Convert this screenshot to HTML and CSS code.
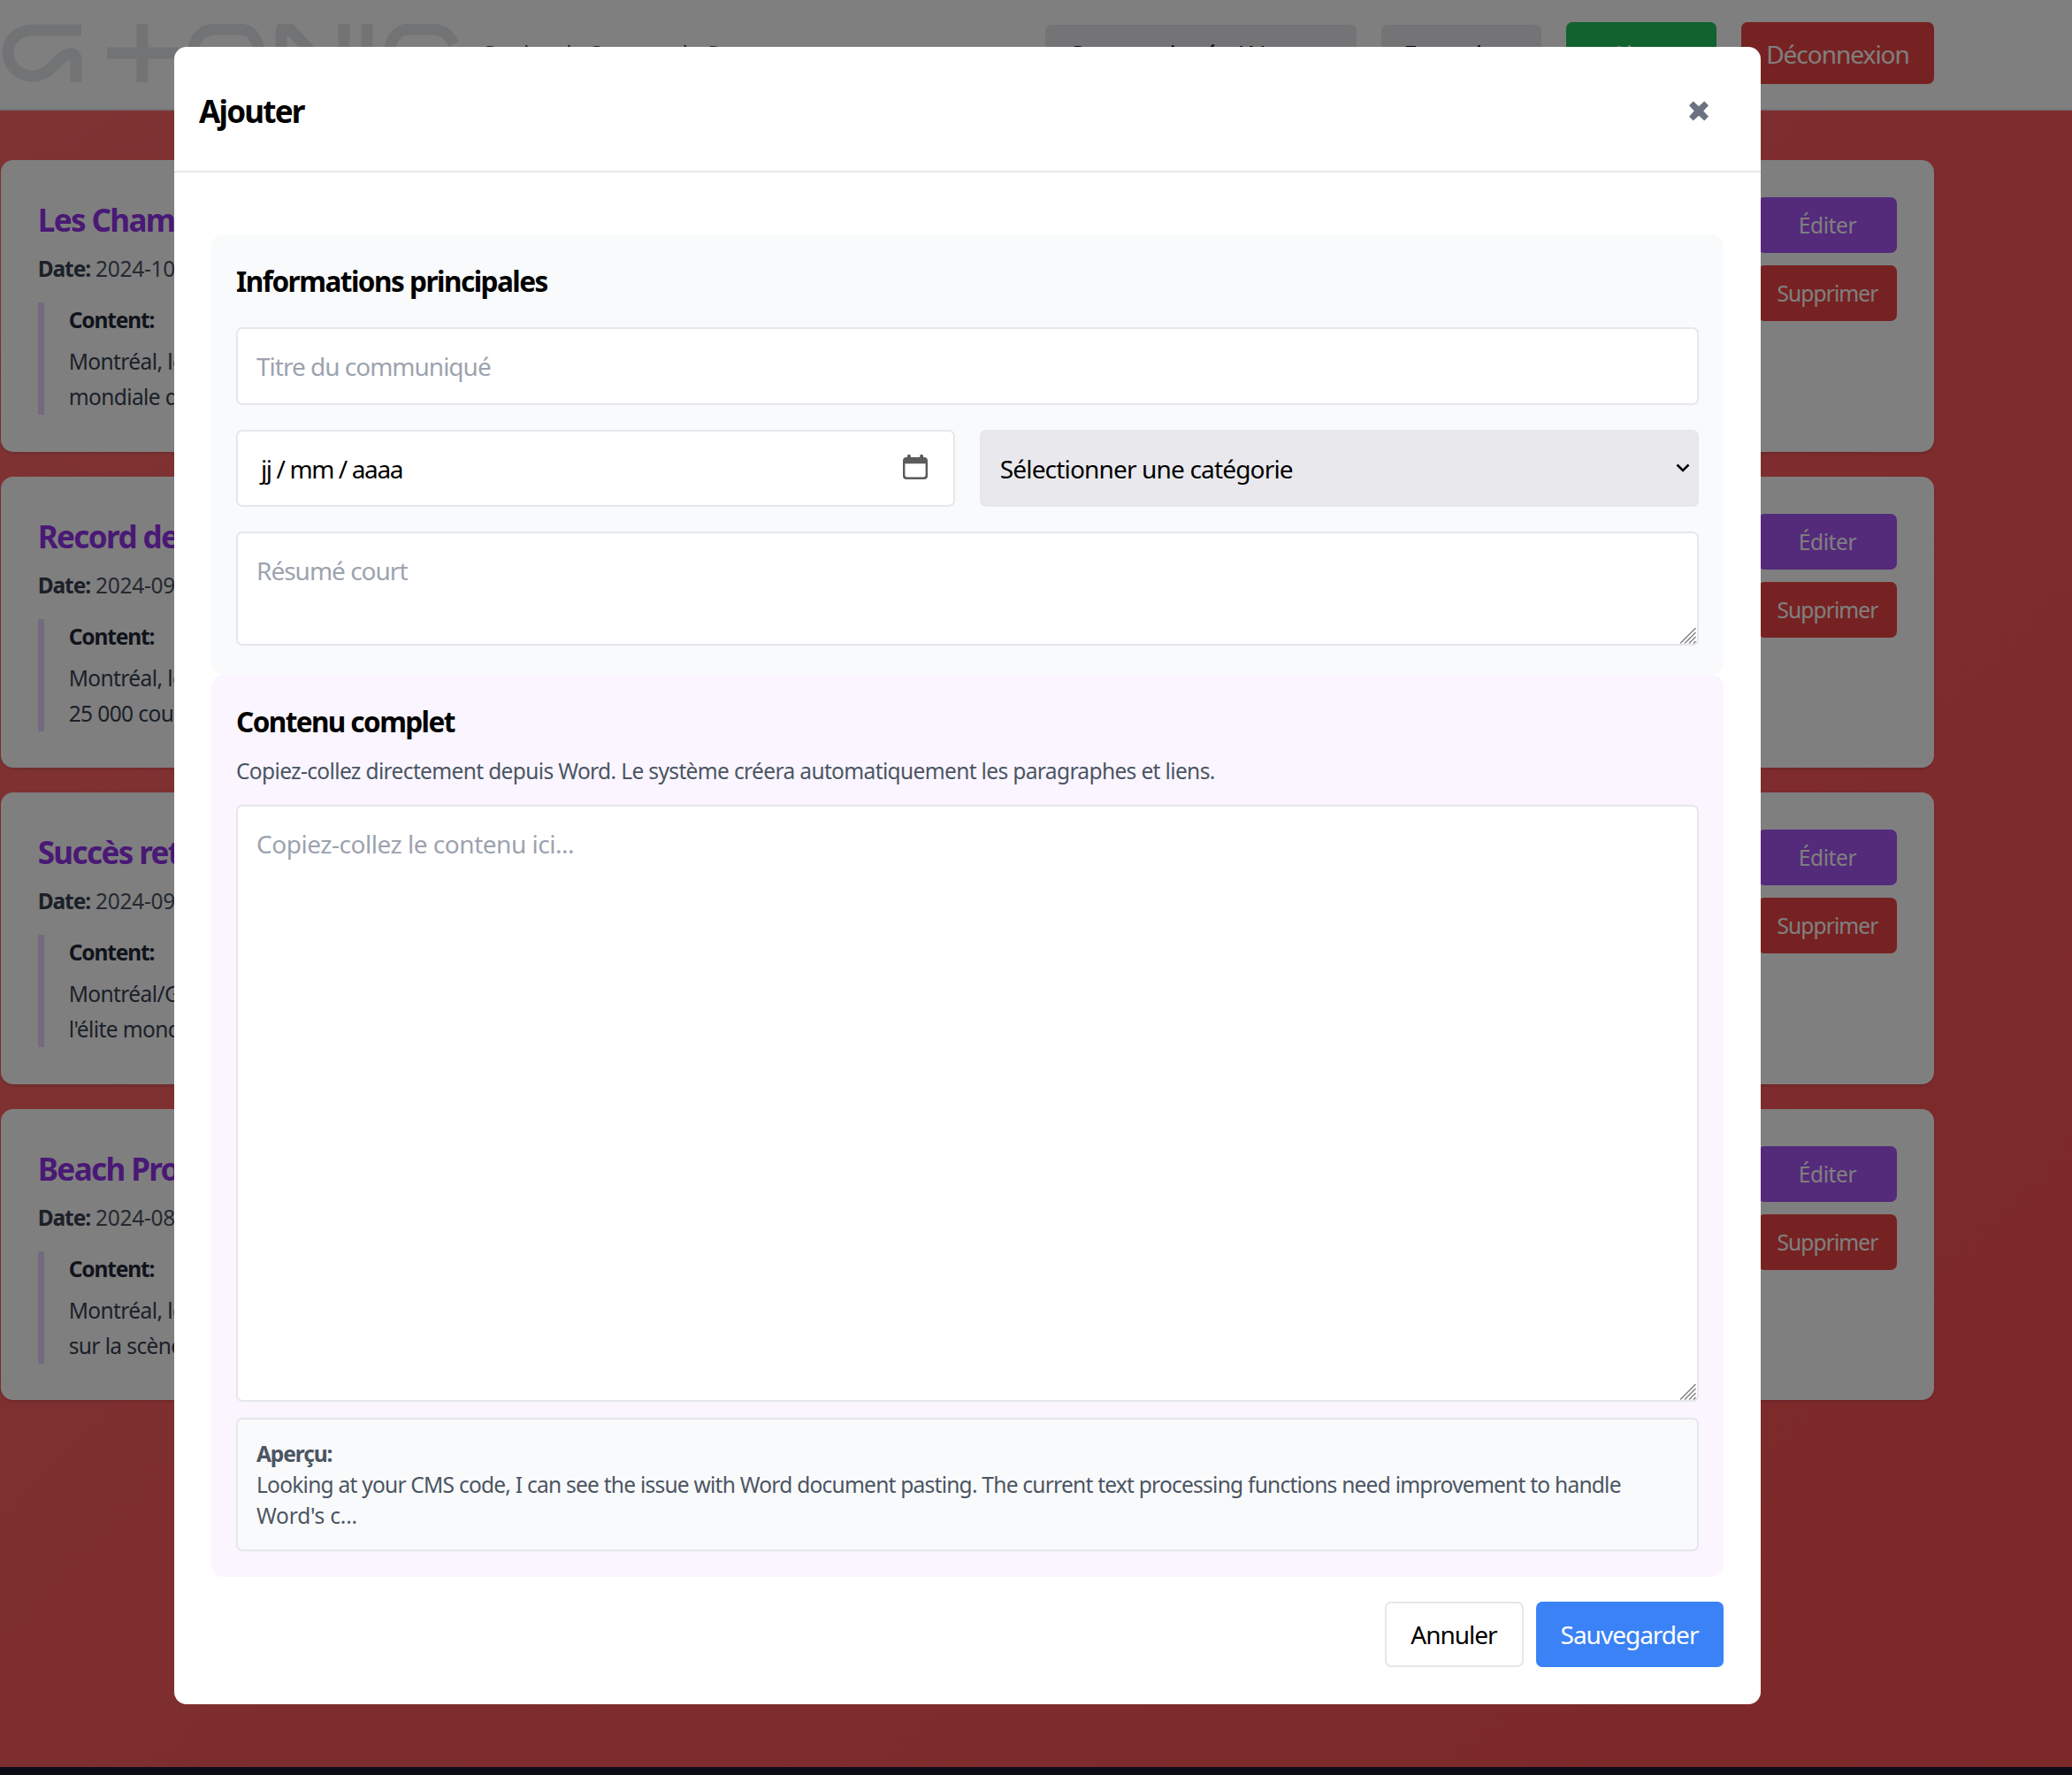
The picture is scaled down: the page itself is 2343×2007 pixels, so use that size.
FILE: index.html
```html
<!DOCTYPE html>
<html lang="fr">
<head>
<meta charset="utf-8">
<title>Gestion de Contenu</title>
<link rel="stylesheet" href="styles.css">
</head>
<body>
<div class="page">
  <header class="topbar">
    <svg class="logo" width="520" height="70" viewBox="0 0 520 70" fill="none" stroke="#e5e7eb" stroke-width="13">
      <path d="M91 7H37C18 7 8 19 8 33S20 59 36 59C58 59 65 34 79 34C84 34 85 37 85 42V66"/>
      <path d="M160 0V66M120 33H200M216 44C216 18 224 6 244 6H268C286 6 293 20 293 44"/>
      <path d="M317 67V10C317 2 323 2 328 7L372 55M388 0V67M414 0V67M512 23C506 10 498 6 485 6H462C446 6 439 20 439 40"/>
    </svg>
    <span class="tagline">Gestion de Contenu de G</span>
    <nav class="tools">
      <div class="pick pick-type">Communiqués / News</div>
      <div class="pick pick-lang">Français</div>
      <button class="btn-top green">+ Ajouter</button>
      <button class="btn-top red">Déconnexion</button>
    </nav>
  </header>
  <main class="list">
    <article class="card">
      <div><h2>Les Champ</h2><p class="date"><b>Date:</b> 2024-10</p>
      <div class="excerpt"><b>Content:</b><p>Montréal, le<br>mondiale de</p></div></div>
      <div class="actions"><button class="edit">Éditer</button><button class="del">Supprimer</button></div>
    </article>
    <article class="card">
      <div><h2>Record de</h2><p class="date"><b>Date:</b> 2024-09</p>
      <div class="excerpt"><b>Content:</b><p>Montréal, le<br>25 000 coure</p></div></div>
      <div class="actions"><button class="edit">Éditer</button><button class="del">Supprimer</button></div>
    </article>
    <article class="card">
      <div><h2>Succès rete</h2><p class="date"><b>Date:</b> 2024-09</p>
      <div class="excerpt"><b>Content:</b><p>Montréal/Ga<br>l'élite mond</p></div></div>
      <div class="actions"><button class="edit">Éditer</button><button class="del">Supprimer</button></div>
    </article>
    <article class="card">
      <div><h2>Beach Pro</h2><p class="date"><b>Date:</b> 2024-08</p>
      <div class="excerpt"><b>Content:</b><p>Montréal, le<br>sur la scène</p></div></div>
      <div class="actions"><button class="edit">Éditer</button><button class="del">Supprimer</button></div>
    </article>
  </main>
  <footer class="foot"></footer>
</div>
<div class="overlay">
  <section class="modal">
    <header class="modal-head">
      <h1>Ajouter</h1>
      <svg class="close" width="24" height="23" viewBox="0 0 22 22" fill="#6b7280"><path d="M5 .5L11 6L17 .5L21.5 5L16 11L21.5 17L17 21.5L11 16L5 21.5L.5 17L6 11L.5 5Z"/></svg>
    </header>
    <form class="modal-body">
      <div class="group info">
        <h3>Informations principales</h3>
        <input class="field" placeholder="Titre du communiqué">
        <div class="row">
          <div class="field date-field"><span>jj / mm / aaaa</span>
            <svg width="28" height="28" viewBox="0 0 28 28"><path d="M5 3V1.7a1.9 1.9 0 0 1 3.8 0V3h10.4V1.7a1.9 1.9 0 0 1 3.8 0V3h1a4 4 0 0 1 4 4v17a4 4 0 0 1-4 4H4a4 4 0 0 1-4-4V7a4 4 0 0 1 4-4zM2.4 10.2v13a2.4 2.4 0 0 0 2.4 2.4h18.4a2.4 2.4 0 0 0 2.4-2.4v-13z" fill="#5b5b5b" fill-rule="evenodd"/></svg>
          </div>
          <div class="field select-field"><span>Sélectionner une catégorie</span>
            <svg width="16" height="11" viewBox="0 0 16 11" fill="none" stroke="#000" stroke-width="2.5"><path d="M1.5 1.5L8 8L14.5 1.5"/></svg>
          </div>
        </div>
        <div class="area short"><textarea placeholder="Résumé court"></textarea>
          <svg class="grip" width="18" height="18" viewBox="0 0 18 18" stroke="#808080" stroke-width="1.4"><path d="M0 17.5L17.5 0M5 17.5L17.5 5M10 17.5L17.5 10M15 17.5L17.5 15"/></svg></div>
      </div>
      <div class="group full">
        <h3>Contenu complet</h3>
        <p class="hint">Copiez-collez directement depuis Word. Le système créera automatiquement les paragraphes et liens.</p>
        <div class="area tall"><textarea placeholder="Copiez-collez le contenu ici..."></textarea>
          <svg class="grip" width="18" height="18" viewBox="0 0 18 18" stroke="#808080" stroke-width="1.4"><path d="M0 17.5L17.5 0M5 17.5L17.5 5M10 17.5L17.5 10M15 17.5L17.5 15"/></svg></div>
        <div class="preview"><b>Aperçu:</b><p>Looking at your CMS code, I can see the issue with Word document pasting. The current text processing functions need improvement to handle<br><span class="last">Word's c...</span></p></div>
      </div>
      <div class="buttons"><button type="button" class="cancel">Annuler</button><button type="button" class="save">Sauvegarder</button></div>
    </form>
  </section>
</div>
</body>
</html>
```
FILE: styles.css
```css
* { box-sizing: border-box; margin: 0; padding: 0; }
body { width: 2343px; height: 2007px; overflow: hidden; position: relative; font: 28px/42px "Noto Sans", sans-serif; color: #000; letter-spacing: -1px; }
button, input, textarea { font: inherit; color: inherit; letter-spacing: inherit; border: 0; outline: 0; }
.page { height: 2007px; display: flex; flex-direction: column; background: linear-gradient(135deg, #ff6767, #fa5053); }
.topbar { height: 125px; flex: none; background: #fff; border-bottom: 2px solid #e5e7eb; display: flex; padding: 25px 156px 0 1px; }
.logo { margin-top: 2px; flex: none; }
.tagline { margin: 18px 0 0 22px; font-size: 24.5px; line-height: 35px; letter-spacing: -.8px; color: #374151; white-space: nowrap; }
.tools { margin-left: auto; display: flex; gap: 28px; }
.pick { margin-top: 3px; height: 66px; background: #e9e9ed; border-radius: 7px; padding: 12px 25px; white-space: nowrap; }
.pick-type { width: 352px; }
.pick-lang { width: 181px; }
.btn-top { height: 70px; color: #fff; border-radius: 7px; white-space: nowrap; padding-top: 1px; }
.green { width: 170px; background: #22c55e; }
.red { width: 218px; background: #ef4444; }
.list { padding: 56px 156px 0 .7px; display: grid; gap: 28px; }
.card { height: 329.6px; background: #fff; border-radius: 14px; padding: 42px; display: flex; justify-content: space-between; box-shadow: 0 2px 3px rgba(0,0,0,.12); }
.card h2 { font-size: 35px; line-height: 49px; padding-top: 1px; letter-spacing: -1.6px; color: #9333ea; white-space: nowrap; }
.date { font-size: 24.5px; line-height: 35px; margin-top: 13px; letter-spacing: -.3px; color: #4b5563; }
.date b { color: #374151; letter-spacing: -1.1px; }
.excerpt { margin-top: 21px; height: 127px; border-left: 7px solid #e9d5ff; padding-left: 28px; font-size: 24.5px; line-height: 40px; letter-spacing: -.6px; color: #374151; white-space: nowrap; }
.excerpt b { display: block; color: #1f2937; letter-spacing: -1.15px; }
.excerpt p { margin-top: 7px; }
.actions { width: 157px; display: flex; flex-direction: column; gap: 14px; }
.actions button { height: 63px; border-radius: 7px; color: #fff; font-size: 24.5px; letter-spacing: -.9px; padding-top: 1px; }
.actions .edit { background: #a855f7; letter-spacing: -.4px; }
.del { background: #ef4444; }
.foot { margin-top: auto; height: 9.5px; background: #151a2c; }
.overlay { position: absolute; inset: 0; background: rgba(0,0,0,.5); padding: 53px 0 0 197px; }
.modal { width: 1793.5px; height: 1873.5px; background: #fff; border-radius: 14px; }
.modal-head { height: 142px; border-bottom: 2px solid #e5e7eb; padding: 4px 58px 0 28px; display: flex; align-items: center; justify-content: space-between; }
.modal-head h1 { font-size: 35px; line-height: 49px; letter-spacing: -1.75px; }
.modal-body { padding: 70px 42px 0; }
.group { border-radius: 14px; padding: 28px; }
.group h3 { font-size: 31.5px; line-height: 49px; letter-spacing: -1.5px; }
.info { height: 498px; background: #f9fafb; }
.full { height: 1020px; background: #faf5ff; }
.full h3 { letter-spacing: -1.58px; }
.field { display: flex; width: 100%; height: 87.5px; background: #fff; border: 2px solid #e5e7eb; border-radius: 7px; padding: 1px 21px 0; align-items: center; justify-content: space-between; }
.info > .field { margin-top: 28px; }
input::placeholder, textarea::placeholder { color: #9ca3af; opacity: 1; }
.row { display: grid; grid-template-columns: repeat(2, minmax(0, 1fr)); gap: 28px; margin: 28px 0; }
.row .date-field { padding: 1px 29px 0 26px; letter-spacing: -1.4px; }
.date-field svg { margin-bottom: 4px; }
.row .select-field { background: #e9e9ed; padding-right: 8px; letter-spacing: -.83px; }
.area { position: relative; }
.area textarea { display: block; width: 100%; height: 100%; resize: none; border: 2px solid #e5e7eb; border-radius: 7px; background: #fff; padding: 21px; }
.tall textarea { letter-spacing: -.47px; }
.short { height: 129px; }
.tall { height: 675px; }
.grip { position: absolute; right: 3px; bottom: 2px; }
.hint { font-size: 24.5px; line-height: 35px; letter-spacing: -.635px; color: #4b5563; margin: 14px 0 21px; white-space: nowrap; }
.preview { margin-top: 18px; height: 151px; border: 2px solid #e5e7eb; border-radius: 7px; background: #f9fafb; padding: 21px; font-size: 24.5px; line-height: 35px; letter-spacing: -.75px; color: #4b5563; white-space: nowrap; }
.preview b { display: block; letter-spacing: -1.1px; }
.preview .last { letter-spacing: -.2px; }
.buttons { display: flex; justify-content: flex-end; gap: 14px; margin-top: 28px; }
.buttons button { height: 74px; border-radius: 7px; }
.save { width: 212px; background: #3b82f6; color: #fff; }
.buttons .cancel { width: 157px; background: #fff; border: 2px solid #e5e7eb; }
```
